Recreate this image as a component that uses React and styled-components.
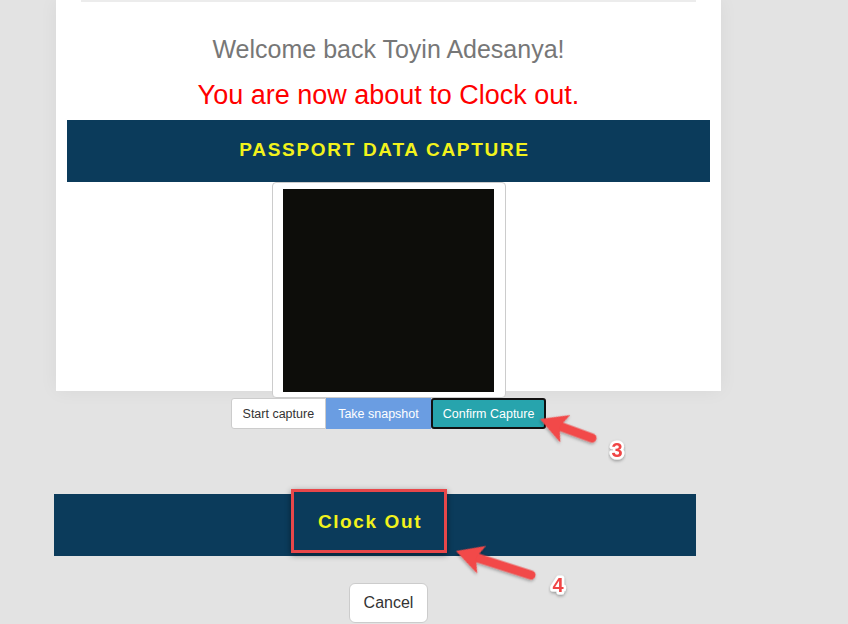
import React from "react";
import styled, { createGlobalStyle } from "styled-components";

const GlobalStyle = createGlobalStyle`
  html, body { margin: 0; padding: 0; }
  body {
    background: #e3e3e3;
    font-family: "Liberation Sans", Arial, sans-serif;
    width: 848px;
    height: 624px;
    overflow: hidden;
  }
  * { box-sizing: border-box; }
`;

const Page = styled.div`
  position: relative;
  width: 848px;
  height: 624px;
  overflow: hidden;
`;

const Column = styled.div`
  width: 665px;
  margin-left: 56px;
  display: flex;
  flex-direction: column;
  align-items: center;
`;

const Panel = styled.section`
  width: 665px;
  height: 391px;
  background: #ffffff;
  box-shadow: 0 0 18px rgba(0, 0, 0, 0.05);
  display: flex;
  flex-direction: column;
  align-items: center;
  & > * { flex-shrink: 0; }
`;

const TopRule = styled.div`
  align-self: flex-start;
  margin-left: 25px;
  width: 615px;
  height: 2px;
  background: #ececec;
`;

const Greeting = styled.h2`
  margin: 35px 0 0;
  font-size: 25px;
  line-height: 1;
  font-weight: normal;
  color: #777777;
`;

const Notice = styled.h3`
  margin: 20px 0 0;
  font-size: 27px;
  line-height: 1;
  font-weight: normal;
  color: #ff0000;
`;

const SectionBar = styled.div`
  align-self: stretch;
  margin: 11px 11px 0;
  height: 62px;
  background: #0b3b5b;
  display: flex;
  align-items: center;
  justify-content: center;
  padding: 0 8px 4px 0;
`;

const BarTitle = styled.span`
  color: #f2f21c;
  font-weight: bold;
  font-size: 19px;
  line-height: 1;
  letter-spacing: 1.7px;
`;

const CamFrame = styled.div`
  width: 234px;
  height: 216px;
  background: #ffffff;
  border: 1px solid #cccccc;
  border-radius: 4px;
  padding: 6px 11px 5px 10px;
  margin-left: 1px;
`;

const CamView = styled.div`
  width: 100%;
  height: 100%;
  background: #0d0d0a;
`;

const ButtonGroup = styled.div`
  display: flex;
  margin-top: 7px;
`;

const GroupButton = styled.button`
  height: 31px;
  padding: 0 11px;
  font-family: "Liberation Sans", Arial, sans-serif;
  font-size: 12.5px;
  border: 1px solid ${(p) => p.$border};
  background: ${(p) => p.$bg};
  color: ${(p) => p.$color};
  border-radius: ${(p) => p.$radius};
  ${(p) => (p.$thick ? "border-width: 2px; padding: 0 10px;" : "")}
`;

const ClockBar = styled.div`
  width: 642px;
  height: 62px;
  margin: 65px 0 0 54px;
  background: #0b3b5b;
  display: flex;
  justify-content: center;
  align-items: flex-start;
  padding-right: 12px;
`;

const ClockButton = styled.button`
  margin-top: -5px;
  width: 156px;
  height: 64px;
  background: #0b3b5b;
  border: 3px solid #e8474a;
  box-shadow: 0 2px 6px rgba(0, 0, 0, 0.45);
  color: #f2f21c;
  font-family: "Liberation Sans", Arial, sans-serif;
  font-weight: bold;
  font-size: 19px;
  letter-spacing: 1.6px;
  padding: 2px 0 0 2px;
`;

const CancelButton = styled.button`
  margin-top: 27px;
  padding: 8px 14px;
  font-family: "Liberation Sans", Arial, sans-serif;
  font-size: 16px;
  line-height: 22px;
  color: #333333;
  background: #ffffff;
  border: 1px solid #cccccc;
  border-radius: 6px;
`;

const Overlay = styled.svg`
  position: absolute;
  left: 0;
  top: 0;
  width: 848px;
  height: 624px;
  pointer-events: none;
`;

const Arrow = ({ tail, tip }) => {
  const dx = tail[0] - tip[0];
  const dy = tail[1] - tip[1];
  const len = Math.sqrt(dx * dx + dy * dy);
  const ang = (Math.atan2(dy, dx) * 180) / Math.PI;
  return (
    <g transform={`translate(${tip[0]} ${tip[1]}) rotate(${ang})`} filter="url(#shadow)">
      <line x1="16" y1="0" x2={len} y2="0" stroke="#f24848" strokeWidth="9" strokeLinecap="round" />
      <polygon points="0,0 27,-14 21,0 27,15" fill="#f24848" />
    </g>
  );
};

const Step = ({ x, y, children }) => (
  <text
    x={x}
    y={y}
    textAnchor="middle"
    fontFamily="'Liberation Sans', Arial, sans-serif"
    fontWeight="bold"
    fontSize="20"
    fill="#f04545"
    stroke="#ffffff"
    strokeWidth="5"
    strokeLinejoin="round"
    paintOrder="stroke"
    filter="url(#shadow)"
  >
    {children}
  </text>
);

export default function App() {
  return (
    <Page>
      <GlobalStyle />
      <Column>
        <Panel>
          <TopRule />
          <Greeting>Welcome back Toyin Adesanya!</Greeting>
          <Notice>You are now about to Clock out.</Notice>
          <SectionBar>
            <BarTitle>PASSPORT DATA CAPTURE</BarTitle>
          </SectionBar>
          <CamFrame>
            <CamView />
          </CamFrame>
        </Panel>
        <ButtonGroup>
          <GroupButton $bg="#ffffff" $color="#333333" $border="#cccccc" $radius="3px 0 0 3px">
            Start capture
          </GroupButton>
          <GroupButton $bg="#6a9de2" $color="#ffffff" $border="#6a9de2" $radius="0">
            Take snapshot
          </GroupButton>
          <GroupButton $bg="#27a4ad" $color="#ffffff" $border="#111111" $radius="3px" $thick>
            Confirm Capture
          </GroupButton>
        </ButtonGroup>
      </Column>
      <ClockBar>
        <ClockButton>Clock Out</ClockButton>
      </ClockBar>
      <Column>
        <CancelButton>Cancel</CancelButton>
      </Column>
      <Overlay viewBox="0 0 848 624">
        <defs>
          <filter id="shadow" x="-30%" y="-30%" width="160%" height="160%">
            <feDropShadow dx="0" dy="1.5" stdDeviation="1.5" floodColor="#000" floodOpacity="0.35" />
          </filter>
        </defs>
        <Arrow tail={[592, 438]} tip={[540, 419]} />
        <Arrow tail={[531, 575]} tip={[456, 551]} />
        <Step x={617} y={457}>3</Step>
        <Step x={558} y={592}>4</Step>
      </Overlay>
    </Page>
  );
}
